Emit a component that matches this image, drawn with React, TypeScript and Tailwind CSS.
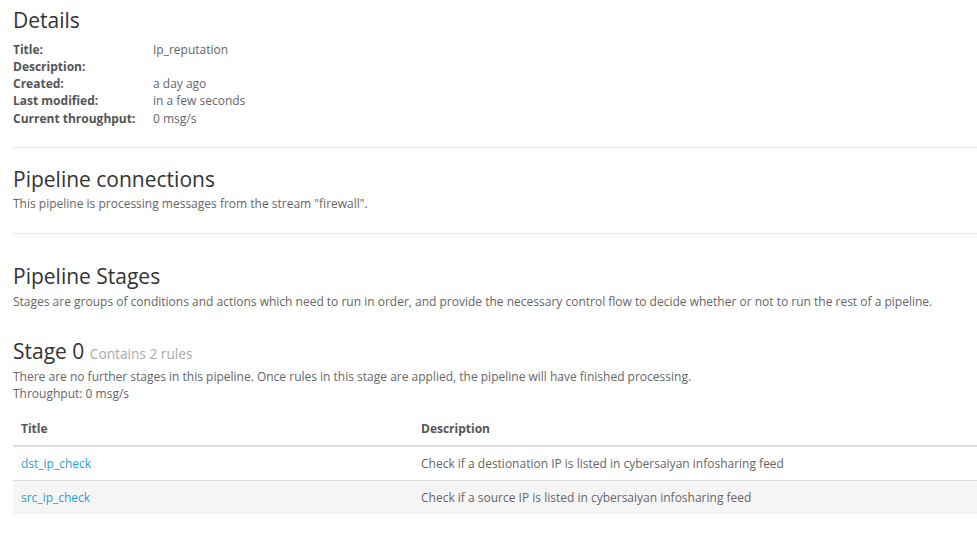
import React from "react";

export default function App() {
  const rows = [
    ["Title:", "Ip_reputation"],
    ["Description:", ""],
    ["Created:", "a day ago"],
    ["Last modified:", "in a few seconds"],
    ["Current throughput:", "0 msg/s"],
  ];
  return (
    <div
      className="w-[977px] h-[547px] overflow-hidden bg-white pl-[13px] text-[12px] leading-[17.14px] text-[#666]"
      style={{ fontFamily: '"Open Sans", "Liberation Sans", sans-serif' }}
    >
      <h2 className="mt-[8px] text-[21px] leading-[24px] text-[#333]">Details</h2>
      <dl className="mt-[8.5px]">
        {rows.map(([k, v]) => (
          <div key={k} className="flex h-[17.3px] leading-[17.3px]">
            <dt className="w-[140px] font-bold text-[#555]">{k}</dt>
            <dd>{v}</dd>
          </div>
        ))}
      </dl>
      <hr className="mt-[20px] border-t border-[#e6e6e6]" />
      <h2 className="mt-[19px] text-[21px] leading-[24px] text-[#333]">Pipeline connections</h2>
      <p className="mt-[4.5px]">This pipeline is processing messages from the stream "firewall".</p>
      <hr className="mt-[20px] border-t border-[#e6e6e6]" />
      <h2 className="mt-[30px] text-[21px] leading-[24px] text-[#333]">Pipeline Stages</h2>
      <p className="mt-[5px]">
        Stages are groups of conditions and actions which need to run in order, and provide the necessary control flow to decide whether or not to run the rest of a pipeline.
      </p>
      <h2 className="mt-[29.5px] text-[21px] leading-[24px] text-[#333]">
        Stage 0 <span className="text-[13.7px] text-[#aaa]">Contains 2 rules</span>
      </h2>
      <p className="mt-[1.5px]">
        There are no further stages in this pipeline. Once rules in this stage are applied, the pipeline will have finished processing.
      </p>
      <p>Throughput: 0 msg/s</p>
      <table className="mt-[10px] w-[1000px] border-collapse text-left">
        <thead>
          <tr className="border-b-2 border-[#ddd]">
            <th className="w-[400px] px-[8px] py-[8px] font-bold text-[#555]">Title</th>
            <th className="px-[8px] py-[8px] font-bold text-[#555]">Description</th>
          </tr>
        </thead>
        <tbody>
          <tr className="border-b border-[#ddd]">
            <td className="px-[8px] py-[8px] text-[#1fa1d8]">dst_ip_check</td>
            <td className="px-[8px] py-[8px]">Check if a destionation IP is listed in cybersaiyan infosharing feed</td>
          </tr>
          <tr className="bg-[#f5f5f5]">
            <td className="px-[8px] py-[8px] text-[#1fa1d8]">src_ip_check</td>
            <td className="px-[8px] py-[8px]">Check if a source IP is listed in cybersaiyan infosharing feed</td>
          </tr>
        </tbody>
      </table>
    </div>
  );
}
